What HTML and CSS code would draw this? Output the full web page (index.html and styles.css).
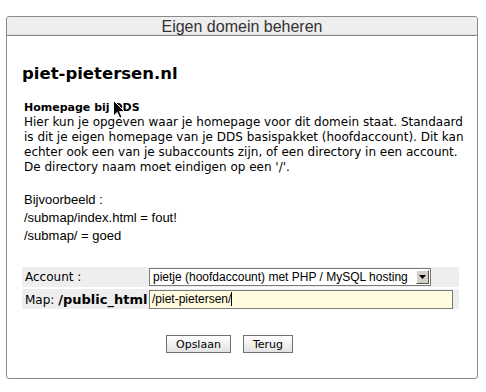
FILE: index.html
```html
<!DOCTYPE html>
<html>
<head>
<meta charset="utf-8">
<link rel="stylesheet" href="styles.css">
</head>
<body>
<div class="panel">
  <div class="panel-head">Eigen domein beheren</div>
  <div class="panel-body">
    <h1 class="domain">piet-pietersen.nl</h1>
    <p class="intro"><b>Homepage bij DDS</b><br>Hier kun je opgeven waar je homepage voor dit domein staat. Standaard is dit je eigen homepage van je DDS basispakket (hoofdaccount). Dit kan echter ook een van je subaccounts zijn, of een directory in een account. De directory naam moet eindigen op een '/'.</p>
    <p class="example">Bijvoorbeeld :<br>/submap/index.html = fout!<br>/submap/ = goed</p>
    <div class="form">
      <div class="row">
        <div class="label">Account :</div>
        <div class="field">
          <div class="select"><span class="select-text">pietje (hoofdaccount) met PHP / MySQL hosting</span><span class="select-btn"><svg width="7" height="4" viewBox="0 0 7 4"><path d="M0 0H7L3.5 4Z" fill="#000"/></svg></span></div>
        </div>
      </div>
      <div class="row">
        <div class="label">Map: <b>/public_html</b></div>
        <div class="field">
          <div class="input">/piet-pietersen/<span class="caret"></span></div>
        </div>
      </div>
    </div>
    <div class="buttons">
      <button class="btn">Opslaan</button>
      <button class="btn">Terug</button>
    </div>
  </div>
</div>
<svg class="cursor" width="12" height="19" viewBox="0 0 12 19"><path d="M0.5 0.5V16L4.2 12.4L6.7 18.2L9 17.2L6.6 11.6H11.5Z" fill="#000" stroke="#fff" stroke-width="1"/></svg>
</body>
</html>
```
FILE: styles.css
```css
html, body { margin: 0; padding: 0; background: #fff; }
body { position: relative; width: 486px; height: 392px; overflow: hidden; font-family: "DejaVu Sans", Verdana, sans-serif; font-size: 12px; color: #000; }
.panel { margin: 16px 0 0 6px; width: 470px; height: 361px; border: 1px solid #8a8a8a; border-radius: 3px; box-sizing: content-box; }
.panel-head { height: 18px; line-height: 19px; background: #eeeeee; border-bottom: 1px solid #8a8a8a; box-shadow: inset 0 -1px 0 #dcdcdc; text-align: center; font-family: "Liberation Sans", Arial, sans-serif; font-size: 16px; color: #333; border-radius: 3px 3px 0 0; }
.panel-body { padding: 0 8px 0 17px; }
.domain { margin: 28px 0 0 -2px; font-size: 16.5px; line-height: 20px; font-weight: bold; }
.intro { margin: 16px 0 0 0; line-height: 15px; }
.intro b { font-size: 11px; }
.example { margin: 16px 0 0 0; font-family: "Liberation Sans", Arial, sans-serif; font-size: 13px; line-height: 18px; }
.form { margin-top: 22px; width: 437px; margin-left: -2px; display: flex; flex-direction: column; gap: 2px; }
.row { display: flex; background: #eeeeee; height: 20px; align-items: center; }
.label { width: 124px; font-size: 12px; padding-left: 3px; color: #000; }
.label b { font-weight: bold; font-size: 13px; }
.field { flex: 1; display: flex; }
.select { width: 282px; height: 18px; box-sizing: border-box; border: 1px solid #7a7a7a; background: #fff; display: flex; align-items: center; font-family: "Liberation Sans", Arial, sans-serif; font-size: 12px; white-space: nowrap; overflow: hidden; }
.select-text { flex: 1; padding-left: 3px; }
.select-btn { width: 13px; height: 14px; margin-right: 1px; box-sizing: border-box; border: 1px solid; border-color: #fff #555 #555 #fff; background: #d4d0c8; display: flex; align-items: center; justify-content: center; }
.input { width: 304px; height: 19px; box-sizing: border-box; border: 1px solid #7a7a7a; background: #fffbdf; font-family: "Liberation Sans", Arial, sans-serif; font-size: 12px; line-height: 17px; padding-left: 2px; display: flex; align-items: center; }
.caret { display: inline-block; width: 1px; height: 14px; background: #000; }
.buttons { margin-top: 26px; display: flex; gap: 12px; padding-left: 142px; }
.btn { font-family: "DejaVu Sans", Verdana, sans-serif; font-size: 11px; height: 18px; padding: 0 9px; border: 1px solid #707070; background: linear-gradient(#ffffff, #e2e2e2); color: #000; border-radius: 0; line-height: 15px; }
.cursor { position: absolute; left: 113px; top: 100px; }
```
